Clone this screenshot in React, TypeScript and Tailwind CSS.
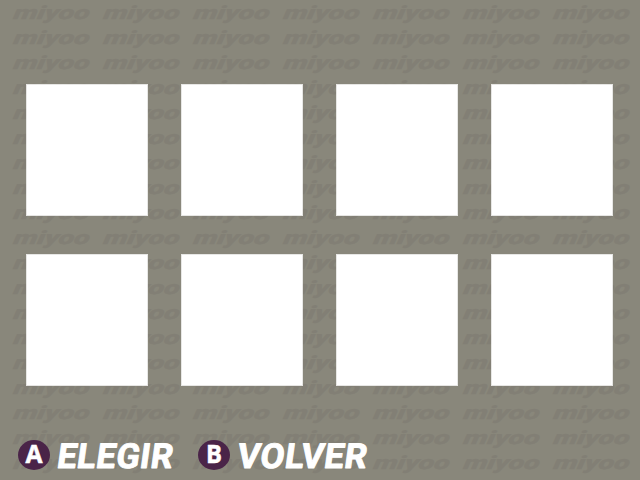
const rows = Array.from({ length: 19 }, (_, i) => i);
const columns = Array.from({ length: 7 }, (_, i) => i);
const tiles = Array.from({ length: 8 }, (_, i) => i);

function Watermark() {
  return (
    <div className="absolute inset-0 grid grid-cols-[repeat(7,90px)] auto-rows-[25px] overflow-hidden" aria-hidden="true">
      {rows.map((row) =>
        columns.map((column) => (
          <svg key={`${row}-${column}`} width="90" height="25" viewBox="0 0 90 25" className="overflow-visible">
            <text
              transform="translate(11.5 19) skewX(-24)"
              textLength="76"
              lengthAdjust="spacingAndGlyphs"
              className="fill-[#827f75] stroke-[#827f75] stroke-[0.4] font-['Roboto',sans-serif] text-[18.5px] font-extrabold"
            >
              miyoo
            </text>
          </svg>
        )),
      )}
    </div>
  );
}

function Action({ button, label, width }: { button: string; label: string; width: number }) {
  return (
    <div className="flex h-[30px] items-center">
      <div className="flex h-[30px] w-8 shrink-0 items-center justify-center rounded-[50%] bg-[#4a2448]">
        <svg width="32" height="30" className="overflow-visible">
          <text
            x="16"
            y="22.5"
            textAnchor="middle"
            textLength={button === "A" ? 17 : 16}
            lengthAdjust="spacingAndGlyphs"
            className="fill-white stroke-white stroke-[0.5] font-['Open_Sans',sans-serif] text-[25px] font-bold"
          >
            {button}
          </text>
        </svg>
      </div>
      <svg width={width + 6} height="30" className="ml-1.5 shrink-0 overflow-visible">
        <text
          transform="translate(0 27.5) skewX(-8)"
          textLength={width - 2}
          lengthAdjust="spacingAndGlyphs"
          strokeLinejoin="round"
          className="fill-white stroke-white stroke-[0.9] font-['Roboto',sans-serif] text-[34.5px] font-bold tracking-[0.5px]"
        >
          {label}
        </text>
      </svg>
    </div>
  );
}

export default function App() {
  return (
    <main className="relative h-[480px] w-[640px] overflow-hidden bg-[#89877b]">
      <Watermark />
      <div className="relative flex h-full flex-col">
        <div className="grid grid-cols-[repeat(4,122px)] gap-x-[33px] gap-y-[38px] pt-[84px] pl-[26px]">
          {tiles.map((tile) => (
            <div key={tile} className="h-[132px] border border-white/80 bg-white bg-clip-padding" />
          ))}
        </div>
        <footer className="mt-[54px] flex gap-[18px] pl-[18px]">
          <Action button="A" label="ELEGIR" width={118} />
          <Action button="B" label="VOLVER" width={132} />
        </footer>
      </div>
    </main>
  );
}
